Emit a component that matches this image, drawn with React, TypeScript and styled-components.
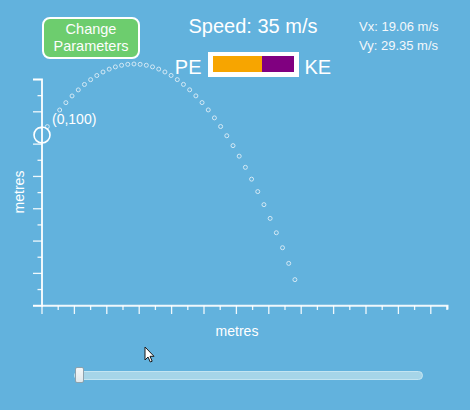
import styled, { createGlobalStyle } from 'styled-components';

const GlobalStyle = createGlobalStyle`
  html, body {
    margin: 0;
    padding: 0;
    background: #62b2dd;
  }
  body {
    font-family: "Liberation Sans", Arial, sans-serif;
    color: #fff;
  }
`;

const Page = styled.div`
  position: relative;
  width: 470px;
  height: 410px;
  overflow: hidden;
  background: #62b2dd;
`;

const Header = styled.header`
  display: flex;
  align-items: flex-start;
  height: 79px;
  padding: 14px 0 0 42px;
  box-sizing: border-box;
`;

const ParamButton = styled.button`
  width: 98px;
  height: 42px;
  margin-top: 3px;
  padding: 0;
  box-sizing: border-box;
  border: 2px solid #fff;
  border-radius: 8px;
  background: #6dcd6e;
  color: #fdfdfd;
  font-family: "Liberation Sans", Arial, sans-serif;
  font-size: 14.5px;
  line-height: 17px;
  cursor: pointer;
`;

const Center = styled.div`
  display: flex;
  flex-direction: column;
  align-items: center;
  width: 160px;
  margin-left: 33px;
`;

const SpeedText = styled.div`
  font-size: 20px;
  line-height: 24px;
  white-space: nowrap;
`;

const MeterRow = styled.div`
  display: flex;
  align-items: center;
  gap: 6px;
  margin-top: 12px;
`;

const EnergyLabel = styled.span`
  font-size: 20px;
  line-height: 24px;
  padding-top: 5px;
`;

const Meter = styled.div`
  display: flex;
  width: 91px;
  height: 25px;
  padding: 4px 5px 5px 5px;
  box-sizing: border-box;
  background: #fff;
`;

const MeterFill = styled.div<{ $color: string; $share: number }>`
  flex: ${(p) => p.$share} 0 0;
  background: ${(p) => p.$color};
`;

const Velocity = styled.div`
  margin-left: 26px;
  margin-top: 3px;
  font-size: 13px;
  line-height: 19px;
  color: #f4f8fb;
  white-space: nowrap;
`;

const Chart = styled.svg`
  display: block;
  margin-top: -23px;
`;

const SliderRow = styled.div`
  display: flex;
  padding-left: 74px;
  margin-top: 21px;
`;

const Range = styled.input`
  -webkit-appearance: none;
  appearance: none;
  width: 349px;
  height: 9px;
  margin: 3.5px 0;
  box-sizing: border-box;
  border: 1px solid #c3e5f2;
  border-radius: 5px;
  background: #a6d5e8;
  outline: none;

  &::-webkit-slider-thumb {
    -webkit-appearance: none;
    appearance: none;
    width: 9px;
    height: 16px;
    box-sizing: border-box;
    border: 1px solid #8da2ad;
    border-radius: 2px;
    background: linear-gradient(#f4f7f8, #dfe8ec);
  }
`;

const Cursor = styled.svg`
  position: absolute;
  left: 144px;
  top: 346px;
`;

const AXIS = 'rgba(255,255,255,0.9)';

const speed = 35;
const vx = 19.06;
const vy = 29.35;
const height = 100;
const g = 9.8;

const App = () => {
  const pe = g * height;
  const ke = 0.5 * speed * speed;

  const yTicks = Array.from({ length: 15 }, (_, j) => ({
    y: 79.5 + j * 16.157,
    major: j % 2 === 0,
  }));
  const xTicks = Array.from({ length: 26 }, (_, i) => ({
    x: 42 + i * 16.2,
    major: i % 2 === 0,
  }));

  // trail of the projectile, in screen coordinates
  const dots = Array.from({ length: 41 }, (_, i) => {
    const x = 47.3 + i * 6.19;
    return { x, y: 64 + 0.00833 * (x - 134) * (x - 134), i };
  }).filter((d) => d.i !== 1);

  return (
    <Page>
      <GlobalStyle />
      <Header>
        <ParamButton>
          Change
          <br />
          Parameters
        </ParamButton>
        <Center>
          <SpeedText>Speed: {speed} m/s</SpeedText>
          <MeterRow>
            <EnergyLabel>PE</EnergyLabel>
            <Meter>
              <MeterFill $color="#f7a500" $share={pe} />
              <MeterFill $color="#800080" $share={ke} />
            </Meter>
            <EnergyLabel>KE</EnergyLabel>
          </MeterRow>
        </Center>
        <Velocity>
          Vx: {vx.toFixed(2)} m/s
          <br />
          Vy: {vy.toFixed(2)} m/s
        </Velocity>
      </Header>

      <Chart width={470} height={290} viewBox="0 56 470 290">
        {dots.map((d) => (
          <circle
            key={d.i}
            cx={d.x}
            cy={d.y}
            r={2}
            fill="none"
            stroke="#d4e9f5"
            strokeWidth={1}
          />
        ))}

        <path d="M33,79.5H42V305.7H33" fill="none" stroke={AXIS} strokeWidth={2} />
        {yTicks.map((t) => (
          <line
            key={t.y}
            x1={t.major ? 33 : 37.5}
            x2={42}
            y1={t.y}
            y2={t.y}
            stroke={AXIS}
            strokeWidth={1.3}
          />
        ))}
        <path d="M42,305.7H447.5V309.5" fill="none" stroke={AXIS} strokeWidth={2} />
        {xTicks.map((t) => (
          <line
            key={t.x}
            x1={t.x}
            x2={t.x}
            y1={305.7}
            y2={t.major ? 314 : 310}
            stroke={AXIS}
            strokeWidth={1.3}
          />
        ))}

        <circle cx={42} cy={135} r={8} fill="none" stroke="#fff" strokeWidth={1.6} />
        <text x={52} y={123.5} fill="#fff" fontSize={14} fontFamily="Liberation Sans, Arial, sans-serif">
          (0,100)
        </text>

        <text
          transform="translate(24.3 192) rotate(-90)"
          textAnchor="middle"
          fill="#fff"
          fontSize={14}
          fontFamily="Liberation Sans, Arial, sans-serif"
        >
          metres
        </text>
        <text
          x={237}
          y={336}
          textAnchor="middle"
          fill="#fff"
          fontSize={14}
          fontFamily="Liberation Sans, Arial, sans-serif"
        >
          metres
        </text>
      </Chart>

      <SliderRow>
        <Range type="range" min={0} max={100} defaultValue={0} />
      </SliderRow>

      <Cursor width={12} height={18} viewBox="0 0 12 18">
        <path
          d="M1,1 L1,14 L4,11 L6.3,16 L8.2,15.2 L6,10.3 L10,10.3 Z"
          fill="#fff"
          stroke="#1a1a1a"
          strokeWidth={1}
          strokeLinejoin="round"
        />
      </Cursor>
    </Page>
  );
};

export default App;
